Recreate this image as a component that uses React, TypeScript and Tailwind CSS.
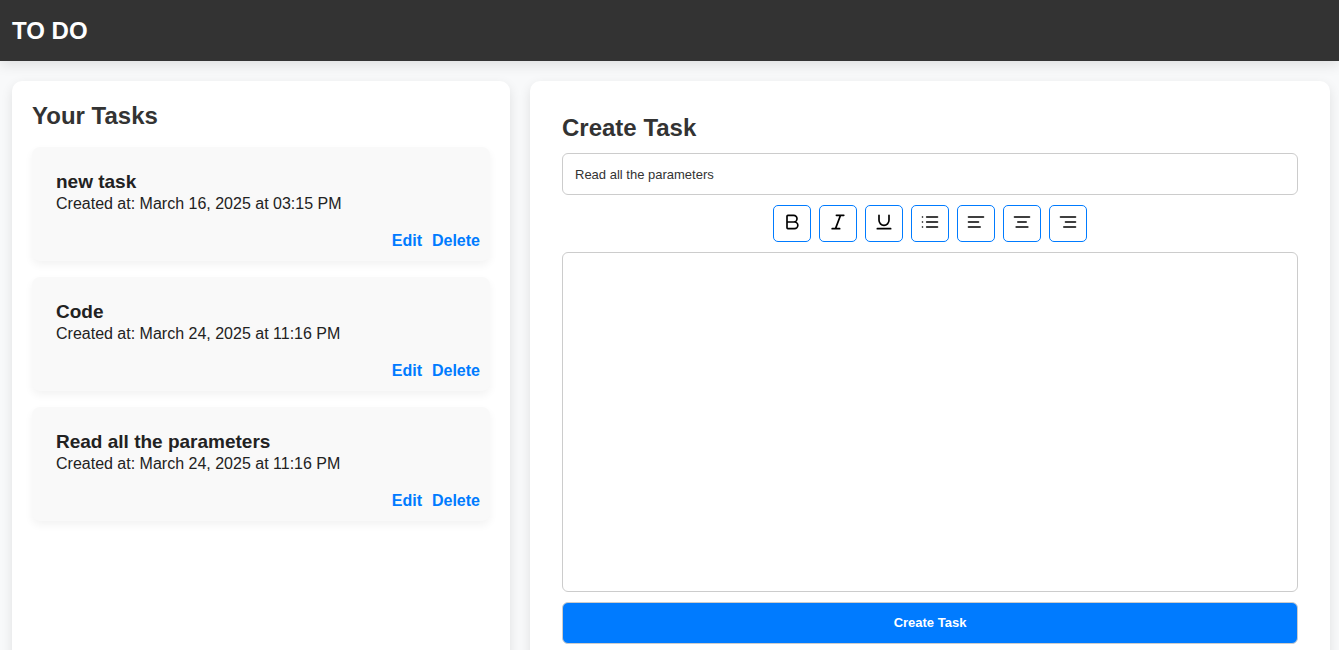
import { useState } from "react";
import type { ReactNode } from "react";

type Task = { id: number; title: string; createdAt: string };

const initialTasks: Task[] = [
  { id: 1, title: "new task", createdAt: "March 16, 2025 at 03:15 PM" },
  { id: 2, title: "Code", createdAt: "March 24, 2025 at 11:16 PM" },
  { id: 3, title: "Read all the parameters", createdAt: "March 24, 2025 at 11:16 PM" },
];

const tools: { label: string; shape: ReactNode }[] = [
  {
    label: "Bold",
    shape: <path d="M6 12h9a4 4 0 0 1 0 8H7a1 1 0 0 1-1-1V5a1 1 0 0 1 1-1h7a4 4 0 0 1 0 8" />,
  },
  { label: "Italic", shape: <path d="M19 4h-9M14 20H5M15 4 9 20" /> },
  { label: "Underline", shape: <path d="M6 4v6a6 6 0 0 0 12 0V4M4 20h16" /> },
  { label: "Bulleted list", shape: <path d="M3 12h.01M3 18h.01M3 6h.01M8 12h13M8 18h13M8 6h13" /> },
  { label: "Align left", shape: <path d="M15 12H3M17 18H3M21 6H3" /> },
  { label: "Align center", shape: <path d="M17 12H7M19 18H5M21 6H3" /> },
  { label: "Align right", shape: <path d="M21 12H9M21 18H7M21 6H3" /> },
];

function TaskCard({ task }: { task: Task }) {
  return (
    <li className="rounded-lg bg-[#f9f9f9] pt-6 pr-[10px] pb-[10px] pl-6 shadow-[0_4px_8px_rgba(0,0,0,0.05)]">
      <h3 className="text-[19px] leading-[22px] font-bold text-[#222]">{task.title}</h3>
      <p className="text-base leading-[22px] text-[#222]">Created at: {task.createdAt}</p>
      <div className="mt-4 flex justify-end gap-[10px] text-base leading-5 font-bold text-[#007bff]">
        <button type="button" className="cursor-pointer">Edit</button>
        <button type="button" className="cursor-pointer">Delete</button>
      </div>
    </li>
  );
}

export default function App() {
  const [title, setTitle] = useState("Read all the parameters");
  const [body, setBody] = useState("");

  return (
    <div className="min-h-screen bg-[#f8f9fa] font-['Liberation_Sans',Arial,sans-serif] text-[#333]">
      <header className="bg-[#333] px-3 py-4 shadow-[0_4px_12px_rgba(0,0,0,0.1)]">
        <h1 className="text-2xl leading-[29px] font-bold text-white">TO DO</h1>
      </header>
      <main className="grid grid-cols-[249fr_400fr] gap-5 pt-5 pr-[9px] pb-5 pl-3">
        <section className="rounded-[10px] bg-white p-5 shadow-[0_4px_12px_rgba(0,0,0,0.1)]">
          <h2 className="text-2xl leading-[30px] font-bold">Your Tasks</h2>
          <ul className="mt-4 flex flex-col gap-4">
            {initialTasks.map((task) => (
              <TaskCard key={task.id} task={task} />
            ))}
          </ul>
        </section>
        <section className="rounded-[10px] bg-white p-8 shadow-[0_4px_12px_rgba(0,0,0,0.1)]">
          <form className="flex flex-col gap-[10px]" onSubmit={(e) => e.preventDefault()}>
            <h2 className="text-2xl leading-[30px] font-bold">Create Task</h2>
            <input
              aria-label="Task title"
              value={title}
              onChange={(e) => setTitle(e.target.value)}
              className="h-[42px] w-full rounded-md border border-[#ccc] bg-white px-3 text-[13px] outline-none"
            />
            <div className="flex justify-center gap-2">
              {tools.map((tool) => (
                <button
                  key={tool.label}
                  type="button"
                  aria-label={tool.label}
                  className="flex h-[37px] w-[38px] cursor-pointer justify-center rounded-[5px] border border-[#007bff] bg-white pt-[6px] text-black"
                >
                  <svg
                    width="20"
                    height="20"
                    viewBox="0 0 24 24"
                    fill="none"
                    stroke="currentColor"
                    strokeWidth="2"
                    strokeLinecap="round"
                    strokeLinejoin="round"
                    aria-hidden="true"
                  >
                    {tool.shape}
                  </svg>
                </button>
              ))}
            </div>
            <textarea
              aria-label="Task description"
              value={body}
              onChange={(e) => setBody(e.target.value)}
              className="h-[340px] w-full resize-none rounded-md border border-[#ccc] bg-white p-3 text-base outline-none"
            />
            <button
              type="submit"
              className="h-[42px] w-full cursor-pointer rounded-md border border-[#ccc] bg-[#007bff] text-[13px] font-bold text-white"
            >
              Create Task
            </button>
          </form>
        </section>
      </main>
    </div>
  );
}
